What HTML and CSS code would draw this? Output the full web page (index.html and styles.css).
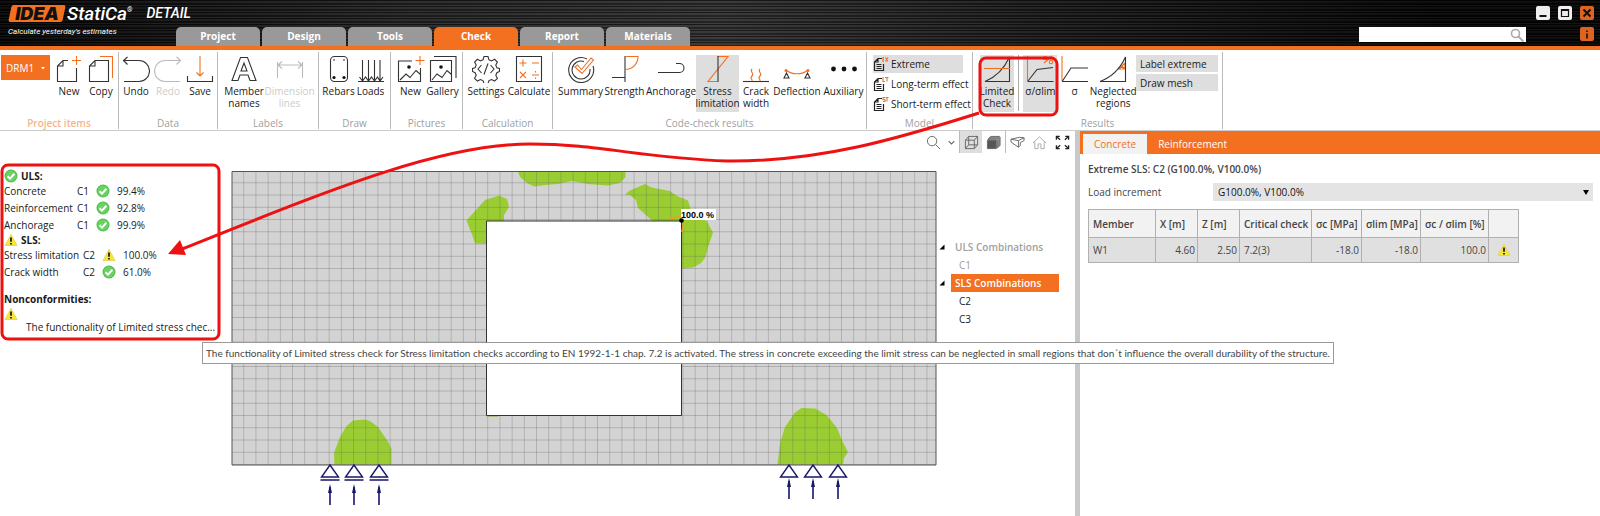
FILE: index.html
```html
<!DOCTYPE html>
<html lang="en">
<head>
    <meta charset="UTF-8">
    <meta name="viewport" content="width=device-width, initial-scale=1.0">
    <title>IDEA StatiCa Detail</title>
    <link rel="stylesheet" href="styles.css">
</head>
<body>
    <svg class="defs" aria-hidden="true">
        <symbol id="ok" viewBox="0 0 14 14">
            <circle cx="7" cy="7" r="6.5" fill="#4fc04f"/>
            <circle cx="7" cy="7" r="5.4" fill="#6bd163"/>
            <path d="M3.6 7.2l2.4 2.4 4.4-4.8" fill="none" stroke="#fff" stroke-width="2"/>
        </symbol>
        <symbol id="warn" viewBox="0 0 14 14">
            <path d="M7 1.5l6 11H1z" fill="#f6e63c" stroke="#e6d75a" stroke-linejoin="round"/>
            <path d="M7 4.6v4.2M7 10v1.6" stroke="#222" stroke-width="1.8"/>
        </symbol>
        <symbol id="sheet" viewBox="0 0 16 16">
            <path d="M9 2.5H5L1.5 6v8.500h9V8M5 2.500V6H1.500M3.500 8.500h5M3.500 10.500h5M3.500 12.500h5" fill="none" stroke="#222" stroke-width="1.200"/>
        </symbol>
    </svg>

    <header class="titlebar">
        <div class="brand">
            <div class="brand-row">
                <span class="logo">IDEA</span>
                <span class="product">StatiCa<sup>®</sup></span>
                <span class="module">DETAIL</span>
            </div>
            <div class="tagline">Calculate yesterday's estimates</div>
        </div>
        <nav class="tabs">
            <a href="#">Project</a>
            <a href="#">Design</a>
            <a href="#">Tools</a>
            <a href="#" class="active">Check</a>
            <a href="#">Report</a>
            <a href="#">Materials</a>
        </nav>
        <div class="window-area">
            <div class="window-row">
                <button class="win" aria-label="Minimize"><svg viewBox="0 0 14 14"><path d="M3.500 10h7" stroke="#111" stroke-width="2"/></svg></button>
                <button class="win" aria-label="Maximize"><svg viewBox="0 0 14 14"><path d="M3.500 3.500h7v7h-7zM3.500 4.500h7" fill="none" stroke="#111" stroke-width="1.200"/></svg></button>
                <button class="win orange" aria-label="Close"><svg viewBox="0 0 14 14"><path d="M3.500 3.500l7 7M10.500 3.500l-7 7" stroke="#111" stroke-width="2"/></svg></button>
            </div>
            <div class="window-row">
                <label class="search">
                    <input type="text" aria-label="Search">
                    <svg viewBox="0 0 14 14"><circle cx="5.500" cy="5.500" r="4" fill="none" stroke="#aaa" stroke-width="1.600"/><path d="M8.500 8.500l5 5" stroke="#aaa" stroke-width="1.800"/></svg>
                </label>
                <button class="win orange" aria-label="About"><svg viewBox="0 0 14 14"><path d="M7 3.500v1.500M7 6.500v5" stroke="#111" stroke-width="1.600"/></svg></button>
            </div>
        </div>
    </header>

    <div class="ribbon">
        <section class="group g-items">
            <div class="tools">
                <button class="project-btn">DRM1 <svg viewBox="0 0 6 4"><path d="M1 1h4L3 3.500z" fill="#fff"/></svg></button>
                <button class="tool"><svg viewBox="0 0 28 28"><path d="M13 5.500H8L2.500 11v15.500h19V13M8 5.500V11H2.500" /><path class="o" d="M21.500 1v9M17 5.500h9"/></svg>New</button>
                <button class="tool"><svg viewBox="0 0 28 28"><path d="M21.500 26.500v-21H8L2.500 11v15.500zM8 5.500V11H2.500"/><path class="o" d="M13 1.500h12.500V23"/></svg>Copy</button>
            </div>
            <h2 class="peach">Project items</h2>
        </section>
        <section class="group g-data">
            <div class="tools">
                <button class="tool"><svg viewBox="0 0 28 28"><path d="M5.500 2L1.500 5.500l4 4M1.500 5.500H17a10 10 0 0 1 0 21H2"/></svg>Undo</button>
                <button class="tool" disabled><svg viewBox="0 0 28 28"><path d="M22.500 2l4 3.500-4 4M26.500 5.500H11a10 10 0 0 0 0 21h15"/></svg>Redo</button>
                <button class="tool"><svg viewBox="0 0 28 28"><path d="M1.500 21v5.500h25V21"/><path class="o" d="M14 1v20M10.500 17.500L14 21l3.500-3.500"/></svg>Save</button>
            </div>
            <h2>Data</h2>
        </section>
        <section class="group g-labels">
            <div class="tools">
                <button class="tool wide"><svg viewBox="0 0 28 28"><path d="M10.500 2.500h7L26 25.500h-6l-2-5.500h-8l-2 5.500H2zM14 8l-3 8h6z"/></svg>Member<br>names</button>
                <button class="tool wider" disabled><svg viewBox="0 0 28 28"><path d="M1.500 23V7M26.500 23V7M2 10h24M6 6.500L2 10l4 3.500M22 6.500l4 3.500-4 3.500"/></svg>Dimension<br>lines</button>
            </div>
            <h2>Labels</h2>
        </section>
        <section class="group g-draw">
            <div class="tools">
                <button class="tool"><svg viewBox="0 0 28 28"><rect x="5.500" y="1.500" width="17" height="25" rx="4"/><circle class="f" cx="9" cy="5" r=".8"/><circle class="f" cx="19" cy="5" r=".8"/><circle class="f" cx="9" cy="22.500" r="1.600"/><circle class="f" cx="19" cy="22.500" r="1.600"/></svg>Rebars</button>
                <button class="tool"><svg viewBox="0 0 28 28"><path d="M1 26.500h26M5.500 5v20M11.500 5v20M17.500 5v20M23 5v20M2.500 22l3 4 3-4 3 4 3-4 3 4 3-4 2.500 4 3-4"/></svg>Loads</button>
            </div>
            <h2>Draw</h2>
        </section>
        <section class="group g-pictures">
            <div class="tools">
                <button class="tool"><svg viewBox="0 0 28 28"><path d="M15 6H1.500v20.500h22V13M3 25l6-6 4 3.500 6-7 4.500 4"/><circle class="f" cx="12" cy="12" r="1.800"/><path class="o" d="M23 1v9M18.500 5.500h9"/></svg>New</button>
                <button class="tool"><svg viewBox="0 0 28 28"><path d="M1.500 5.500h21v21h-21zM3 25l5-6 5 3.500 5-7 4.500 4M5 1.500h22V23"/><circle class="f" cx="12" cy="12" r="1.800"/></svg>Gallery</button>
            </div>
            <h2>Pictures</h2>
        </section>
        <section class="group g-calc">
            <div class="tools">
                <button class="tool wide"><svg viewBox="0 0 28 28"><path d="M12 1.500h4l1 3.300 2.600 1.100 3-1.600 2.800 2.800-1.600 3 1.100 2.600 2.600.8v3l-2.600 1.200-1.100 2.600 1.600 3-2.800 2.800-3-1.600-2.600 1.100-1 3h-4l-1-3-2.600-1.100-3 1.600-2.800-2.800 1.600-3-1.100-2.600-2.600-1.200v-3l2.600-.8 1.100-2.600-1.600-3 2.800-2.800 3 1.600L11 4.800zM9.500 10L6 14l3.500 4M18.500 10l3.500 4-3.500 4M16 8.500l-4 11"/></svg>Settings</button>
                <button class="tool wide"><svg viewBox="0 0 28 28"><path d="M1.500 1.500h25v25h-25z"/><path class="o" d="M8 4.500v7M4.500 8h7M17 8h7M5 17l6 6M11 17l-6 6M17 20h7M20.500 16v1.500M20.500 22.500V24"/></svg>Calculate</button>
            </div>
            <h2>Calculation</h2>
        </section>
        <section class="group g-results">
            <div class="tools">
                <button class="tool wide"><svg viewBox="0 0 28 28"><path d="M20 4A12.500 12.500 0 1 0 26 11M17 6.500A9 9 0 1 0 23 14"/><path class="o" d="M8 12l2.500-2 4 4.500L24 3l2.500 2L15 18.500z"/></svg>Summary</button>
                <button class="tool wide"><svg viewBox="0 0 28 28"><path d="M14 1v26M1 22.500h13"/><path class="o" d="M14 1.500h13c0 7-5 13-13 13"/></svg>Strength</button>
                <button class="tool wider"><svg viewBox="0 0 28 28"><path d="M1 17.500h21.500a4.500 4.500 0 0 0 0-9H19"/></svg>Anchorage</button>
                <button class="tool wide on"><svg viewBox="0 0 28 28"><path class="o" d="M13.500 1.500H24l-20 25h9.500"/><path d="M14 1v26"/></svg>Stress<br>limitation</button>
                <button class="tool"><svg viewBox="0 0 28 28"><path d="M1 26.500h26"/><path class="o" d="M10 14c-3 3 3 4 0 7s1 3 0 5M18 14c-3 3 3 4 0 7s1 3 0 5"/></svg>Crack<br>width</button>
                <button class="tool wider"><svg viewBox="0 0 28 28"><path class="o" d="M3 15c6 5 16 5 22 0"/><path d="M3.500 18l-2.500 5h5zM24.500 18l-2.500 5h5z"/><circle class="fo" cx="3" cy="15.500" r="1.500"/><circle class="fo" cx="25" cy="15.500" r="1.500"/></svg>Deflection</button>
                <button class="tool wide"><svg viewBox="0 0 28 28"><circle class="f" cx="3.500" cy="14" r="2.400"/><circle class="f" cx="14" cy="14" r="2.400"/><circle class="f" cx="24.500" cy="14" r="2.400"/></svg>Auxiliary</button>
            </div>
            <h2>Code-check results</h2>
        </section>
        <section class="group g-model">
            <div class="rows">
                <button class="row on"><svg viewBox="0 0 16 16"><use href="#sheet"/><path class="o" d="M11 1.500h-1v4h1M10 3.500h1M12.500 1.500l2.500 4M15 1.500l-2.500 4"/></svg>Extreme</button>
                <button class="row"><svg viewBox="0 0 16 16"><use href="#sheet"/><path class="o" d="M10 1v4.500h2M12 1.500h3.500M14 1.500v4"/></svg>Long-term effect</button>
                <button class="row"><svg viewBox="0 0 16 16"><use href="#sheet"/><path class="o" d="M12 1.500h-2v2h2v2h-2M12.500 1.500h3M14 1.500v4"/></svg>Short-term effect</button>
            </div>
            <h2>Model</h2>
        </section>
        <section class="group g-extra">
            <div class="tools">
                <button class="tool mid on"><svg viewBox="0 0 28 28"><path d="M2 26.500C13 22 21 14 26.500 2v24.500z"/><path class="o" d="M1 13.500h26"/></svg>Limited<br>Check</button>
                <span class="divider"></span>
                <button class="tool mid on"><svg viewBox="0 0 28 28"><path class="o" d="M1.500 1v25M18 8l8-7"/><circle class="o" cx="19" cy="3" r="1.700"/><circle class="o" cx="25" cy="7" r="1.700"/><path d="M1.500 26.500h26M2 26l9-11.500 16-2"/></svg>σ/σlim</button>
                <button class="tool"><svg viewBox="0 0 28 28"><path class="o" d="M1 1v25"/><path d="M1 26.500h26M1.500 26l8.500-13h17"/></svg>σ</button>
                <button class="tool wide"><svg viewBox="0 0 28 28"><path class="o" d="M26 8l-6 6h6zM20 14l3-3 3 3M22 11l4 3"/><path d="M1 26.500C13 22 21 14 26.500 2v24.500z"/></svg>Neglected<br>regions</button>
                <div class="rows labels">
                    <button class="row on">Label extreme</button>
                    <button class="row on">Draw mesh</button>
                </div>
            </div>
            <h2>Results</h2>
        </section>
    </div>

    <main class="workspace">
        <div class="scene">
            <div class="view-tools">
                <button aria-label="Zoom"><svg viewBox="0 0 16 16"><circle cx="6.500" cy="6.500" r="5"/><path d="M10 10l5 5"/></svg></button>
                <button class="narrow" aria-label="Zoom options"><svg viewBox="0 0 16 16"><path d="M3 5.500l5 5 5-5" stroke-width="2"/></svg></button>
                <button class="on sep" aria-label="Wireframe"><svg viewBox="0 0 16 16"><path d="M1.500 5.500h9.500v9H1.500zM1.500 5.500l3.500-4h9.500l-3.500 4M14.500 1.500v9l-3.500 4M5 1.500v9h9.500M5 10.500l-3.500 4"/></svg></button>
                <button aria-label="Solid"><svg viewBox="0 0 16 16"><path d="M1.500 5.500h9.500v9H1.500z" fill="#555"/><path d="M2 4.500l3-3h9.500l-3 3z" fill="#888"/><path d="M12 5.500l3-3v8.500l-3 3z" fill="#888"/></svg></button>
                <button class="sep" aria-label="Member view"><svg viewBox="0 0 16 16"><path d="M1 4.500l9-2 5 .5-6 3zM1 4.500v3l8 5.500V6M9 13l2-2V8l4-2V3"/></svg></button>
                <button aria-label="Home"><svg viewBox="0 0 16 16" class="faint"><path d="M1 8.500L8 2l7 6.500M3 7.500v7h3.500v-5h3v5H13v-7"/></svg></button>
                <button aria-label="Full view"><svg viewBox="0 0 16 16" class="dark"><path d="M1.500 5V1.500H5M1.500 1.500L5.500 5M11 1.500h3.500V5M14.500 1.500L10.500 5M1.500 11v3.500H5M1.500 14.500L5.500 11M14.500 11v3.500H11M14.500 14.500L10.500 11"/></svg></button>
            </div>

            <div class="scene-body">
                <aside class="summary">
                    <h3><svg class="ico"><use href="#ok"/></svg>ULS:</h3>
                    <table class="uls">
                        <tr><td>Concrete</td><td>C1</td><td><svg class="ico"><use href="#ok"/></svg></td><td>99.4%</td></tr>
                        <tr><td>Reinforcement</td><td>C1</td><td><svg class="ico"><use href="#ok"/></svg></td><td>92.8%</td></tr>
                        <tr><td>Anchorage</td><td>C1</td><td><svg class="ico"><use href="#ok"/></svg></td><td>99.9%</td></tr>
                    </table>
                    <h3><svg class="ico"><use href="#warn"/></svg>SLS:</h3>
                    <table class="sls">
                        <tr><td>Stress limitation</td><td>C2</td><td><svg class="ico"><use href="#warn"/></svg></td><td>100.0%</td></tr>
                        <tr><td>Crack width</td><td>C2</td><td><svg class="ico"><use href="#ok"/></svg></td><td>61.0%</td></tr>
                    </table>
                    <h3 class="nonconf">Nonconformities:</h3>
                    <svg class="ico"><use href="#warn"/></svg>
                    <p>The functionality of Limited stress chec...</p>
                </aside>

                <svg class="model" viewBox="230 170 708 340">
                    <defs>
                        <pattern id="mesh" x="232" y="171" width="12.200" height="12.250" patternUnits="userSpaceOnUse">
                            <path d="M12 0v12.250M0 12h12.200" stroke="#606060" stroke-opacity=".45" stroke-width=".9" fill="none"/>
                        </pattern>
                        <g id="support">
                            <path d="M0 0l-8.500 12h17z" fill="#fff" stroke="#16166b" stroke-width="1.400"/>
                        </g>
                        <g id="reaction">
                            <path d="M0 3v18" stroke="#16166b" stroke-width="1.600"/>
                            <path d="M0 0l2 9h-4z" fill="#16166b"/>
                        </g>
                    </defs>
                    <path d="M232 171.500h704v293.500H232z" fill="#d3d3d3"/>
                    <g fill="#9acd32">
                        <path d="M518 171.500l2 5.500 7 6 7 3.500 11-1.500 13-1 14-3 16 3 20 1.500 12-2.500 5.500-6v-5.500z"/>
                        <path d="M466.500 220.500L485 200l14-4.500 8 3.500 2 8-5 8v6h-17v23l-12-.5-2-6.500z"/>
                        <path d="M625 194.500l5-4 15-6.500 6.500 3.500L670 191l7 5 11 4.500 3 9.500 15.500 11 6.500 11.500-5 14.500-2.500 10-4.500 6-8 4.500-11.500 1V221h-29L638 208l-2-8-6-5z"/>
                        <path d="M334.500 464.500L334 453l6-16 6.500-11 6.500-5.500 12-1 5 1.500 8 6 10 14.500 3.500 7.500v15.500z"/>
                        <path d="M777.500 464.500L780 443l5-16 10-14.500 6.500-4.500 13.500.5 11.500 6.500L837 428l5.500 13.500L848 452l-4 6-1 6.500z"/>
                    </g>
                    <path d="M232 171.500h704v293.500H232z" fill="url(#mesh)" stroke="#555"/>
                    <path d="M487 415.500h11" stroke="#9a9a32" stroke-width="2"/>
                    <path d="M486.500 221h195v194.500h-195z" fill="#fff" stroke="#333"/>
                    <path d="M669 219l12-3M684 222l-2 10" stroke="#f79a1c" stroke-width="1.600"/>
                    <path d="M681 209h35v11h-35z" fill="#fff"/>
                    <circle cx="681.500" cy="220.500" r="2.300"/>
                    <text x="681" y="218" class="peak">100.0 %</text>
                    <use href="#support" x="330" y="465"/>
                    <use href="#support" x="354" y="465"/>
                    <use href="#support" x="379" y="465"/>
                    <path d="M320.500 480h19M344.500 480h19M369.500 480h19" stroke="#16166b" stroke-width="1.500"/>
                    <use href="#reaction" x="330" y="484"/>
                    <use href="#reaction" x="354" y="484"/>
                    <use href="#reaction" x="379" y="484"/>
                    <use href="#support" x="789" y="465"/>
                    <use href="#support" x="813" y="465"/>
                    <use href="#support" x="838" y="465"/>
                    <use href="#reaction" x="789" y="478"/>
                    <use href="#reaction" x="813" y="478"/>
                    <use href="#reaction" x="838" y="478"/>
                </svg>

                <ul class="tree">
                    <li class="head muted"><svg viewBox="0 0 6 6"><path d="M5.500.5v5h-5z"/></svg><span>ULS Combinations</span></li>
                    <li class="muted"><span>C1</span></li>
                    <li class="head selected"><svg viewBox="0 0 6 6"><path d="M5.500.5v5h-5z"/></svg><span>SLS Combinations</span></li>
                    <li><span>C2</span></li>
                    <li><span>C3</span></li>
                </ul>
            </div>
        </div>

        <section class="panel">
            <nav class="panel-tabs">
                <a href="#" class="active">Concrete</a>
                <a href="#">Reinforcement</a>
            </nav>
            <div class="panel-body">
                <h3>Extreme SLS: C2 (G100.0%, V100.0%)</h3>
                <div class="field">
                    <label for="increment">Load increment</label>
                    <select id="increment"><option>G100.0%, V100.0%</option></select>
                </div>
                <table class="data">
                    <colgroup><col class="c-member"><col class="c-xz"><col class="c-xz"><col class="c-check"><col class="c-sc"><col class="c-sl"><col class="c-ratio"><col class="c-icon"></colgroup>
                    <thead>
                        <tr><th>Member</th><th>X [m]</th><th>Z [m]</th><th>Critical check</th><th>σc [MPa]</th><th>σlim [MPa]</th><th>σc / σlim [%]</th><th></th></tr>
                    </thead>
                    <tbody>
                        <tr><td>W1</td><td class="num">4.60</td><td class="num">2.50</td><td>7.2(3)</td><td class="num">-18.0</td><td class="num">-18.0</td><td class="num">100.0</td><td class="mark"><svg class="ico"><use href="#warn"/></svg></td></tr>
                    </tbody>
                </table>
            </div>
        </section>
    </main>

    <div class="tooltip" role="tooltip">The functionality of Limited stress check for Stress limitation checks according to EN 1992-1-1 chap. 7.2 is activated. The stress in concrete exceeding the limit stress can be neglected in small regions that don´t influence the overall durability of the structure.</div>

    <!-- callout marks -->
    <svg class="callout" width="1600" height="516" viewBox="0 0 1600 516" aria-hidden="true">
        <rect x="2" y="165" width="217" height="174" rx="6"/>
        <rect x="980" y="58" width="77" height="57" rx="6"/>
        <path d="M979 113C900 138 820 162 727 161C640 158 600 144 530 144C440 144 330 190 182 249"/>
        <path class="tip" d="M168 254l12-14 6 15z"/>
    </svg>
</body>
</html>
```
FILE: styles.css
```css
* {
    box-sizing: border-box;
}

body {
    margin: 0;
    min-height: 100vh;
    display: flex;
    flex-direction: column;
    position: relative;
    overflow-x: hidden;
    background: #fff;
    color: #1a1a1a;
    font: 10px/12px "Open Sans", "Noto Sans", sans-serif;
}

button, input, select {
    font: inherit;
    color: inherit;
    border: 0;
    padding: 0;
    margin: 0;
    background: none;
}

a {
    text-decoration: none;
}

h2, h3, p {
    margin: 0;
}

.defs {
    position: absolute;
    width: 0;
    height: 0;
}

.ico {
    width: 14px;
    height: 14px;
    display: block;
}

/* title bar */
.titlebar {
    display: flex;
    height: 50px;
    border-bottom: 4px solid #f37021;
    background:
        repeating-linear-gradient(rgba(0, 0, 0, 0.5) 0 1px, rgba(255, 255, 255, 0.04) 1px 3px, rgba(0, 0, 0, 0.3) 3px 5px, rgba(255, 255, 255, 0.06) 5px 6px),
        linear-gradient(90deg, #050505, #262626 25%, #333 45%, #1c1c1c 65%, #050505 90%);
}

.brand {
    width: 176px;
    flex: none;
    padding: 4px 0 0 8px;
    color: #fff;
    font-family: Roboto, sans-serif;
    font-style: italic;
    white-space: nowrap;
}

.brand-row {
    display: flex;
    align-items: center;
    height: 18px;
}

.logo {
    position: relative;
    z-index: 0;
    flex: none;
    width: 58px;
    text-align: center;
    font-family: Inter, sans-serif;
    font-size: 18px;
    font-weight: 900;
    line-height: 17px;
    color: #111;
}

.logo::before {
    content: "";
    position: absolute;
    z-index: -1;
    inset: 0 2px;
    background: #f37021;
    border-radius: 2px;
    transform: skewX(-12deg);
}

.product {
    margin-left: 1px;
    font-size: 19px;
    font-weight: 500;
}

.product sup {
    font-size: 7px;
    line-height: 7px;
    vertical-align: 8px;
}

.module {
    margin-left: 14px;
    font-size: 14px;
    font-weight: 500;
}

.tagline {
    margin-top: 4px;
    font-size: 8px;
}

.tabs {
    display: flex;
    align-items: flex-end;
    gap: 2px;
}

.tabs a {
    width: 84px;
    height: 19px;
    border-radius: 5px 5px 0 0;
    background: #999;
    color: #fff;
    font-weight: 700;
    line-height: 19px;
    text-align: center;
}

.tabs a.active {
    background: #f37021;
}

.window-area {
    margin-left: auto;
    padding: 6px 6px 0 0;
    display: flex;
    flex-direction: column;
    gap: 7px;
}

.window-row {
    display: flex;
    justify-content: flex-end;
    gap: 8px;
}

.win {
    width: 14px;
    height: 14px;
    border-radius: 2px;
    background: #eee;
}

.win svg {
    display: block;
}

.win.orange {
    background: #dd6420;
}

.search {
    display: flex;
    align-items: center;
    width: 167px;
    height: 15px;
    margin-right: 46px;
    padding-right: 2px;
    background: #fff;
}

.search input {
    flex: 1;
    min-width: 0;
    outline: 0;
}

.search svg {
    width: 14px;
    height: 14px;
}

/* ribbon */
.ribbon {
    display: flex;
    height: 81px;
    padding-top: 2px;
    border-bottom: 1px solid #ccc;
}

.group {
    display: flex;
    flex: none;
    flex-direction: column;
    justify-content: space-between;
    height: 77px;
    padding-top: 3px;
    border-right: 1px solid #bbb;
}

.group h2 {
    font-size: 10px;
    font-weight: 400;
    line-height: 12px;
    color: #a0a0a0;
    text-align: center;
}

.group h2.peach {
    color: #f7b48c;
    font-weight: 600;
}

.g-items { width: 119px; }
.g-data { width: 99px; }
.g-labels { width: 101px; }
.g-draw { width: 72px; }
.g-pictures { width: 72px; }
.g-calc { width: 90px; }
.g-results { width: 314px; }
.g-model { width: 106px; }
.g-extra { width: 250px; }

.tools {
    display: flex;
    justify-content: center;
    align-items: flex-start;
}

.g-results .tools {
    gap: 1px;
    padding-left: 5px;
}

.g-extra .tools {
    justify-content: space-between;
    padding: 0 4px 0 7px;
}

.tool {
    display: flex;
    flex-direction: column;
    align-items: center;
    width: 32px;
    height: 57px;
    line-height: 12px;
    white-space: nowrap;
}

.tool.mid {
    width: 34px;
}

.tool.wide {
    width: 43px;
}

.tool.wider {
    width: 48px;
}

.tool:disabled {
    color: #ccc;
}

.tool svg {
    flex: none;
    width: 28px;
    height: 28px;
    margin-bottom: 2px;
}

.tool svg *, .row svg path {
    fill: none;
    stroke: #333;
    stroke-width: 1.1;
}

.tool:disabled svg * {
    stroke: #bbb;
}

.tool svg .o, .row svg .o {
    stroke: #f37021;
}

.tool svg .f {
    fill: #111;
    stroke: none;
}

.tool svg .fo {
    fill: #f37021;
    stroke: none;
}

.on {
    background: #dedede;
}

.project-btn {
    display: flex;
    align-items: center;
    justify-content: space-between;
    width: 49px;
    height: 25px;
    margin-right: 3px;
    padding: 0 4px 0 5px;
    background: #f37021;
    color: #fff;
}

.project-btn svg {
    width: 6px;
    height: 4px;
}

.divider {
    width: 1px;
    height: 56px;
    margin: 0 3px;
    background: #aaa;
}

.rows {
    display: flex;
    flex-direction: column;
    gap: 2px;
    padding-left: 6px;
}

.row {
    display: flex;
    align-items: center;
    gap: 2px;
    width: 90px;
    height: 18px;
    white-space: nowrap;
}

.row svg {
    flex: none;
    width: 16px;
    height: 16px;
}

.rows.labels {
    padding: 0;
}

.labels .row {
    width: 82px;
    height: 17px;
    padding-left: 4px;
}

/* work area */
.workspace {
    flex: 1;
    display: flex;
}

.scene {
    flex: 1;
    min-width: 0;
}

.view-tools {
    display: flex;
    justify-content: flex-end;
    height: 23px;
    padding-right: 1px;
}

.view-tools button {
    display: flex;
    align-items: center;
    justify-content: center;
    width: 23px;
    height: 22px;
}

.view-tools .narrow {
    width: 12px;
    margin-right: 2px;
}

.view-tools .sep {
    border-left: 1px solid #bbb;
}

.view-tools svg {
    width: 15px;
    height: 15px;
    fill: none;
    stroke: #666;
}

.view-tools .narrow svg {
    width: 9px;
}

.view-tools .faint {
    stroke: #aaa;
}

.view-tools .dark {
    stroke: #222;
    stroke-width: 1.4;
}

.scene-body {
    display: flex;
    padding-top: 10px;
}

.summary {
    flex: none;
    width: 230px;
    padding: 5px 0 0 4px;
}

.summary h3 {
    display: flex;
    align-items: center;
    gap: 3px;
    height: 13px;
    font-size: 10px;
    font-weight: 700;
}

.summary table {
    border-collapse: collapse;
}

.summary td {
    height: 17px;
    padding: 0;
    white-space: nowrap;
}

.uls td:nth-child(1) { width: 73px; }
.sls td:nth-child(1) { width: 79px; }
.summary td:nth-child(2) { width: 19px; }
.summary td:nth-child(3) { width: 21px; }

.summary .nonconf {
    margin: 12px 0 2px;
}

.summary p {
    padding-left: 22px;
    white-space: nowrap;
}

.model {
    flex: 1;
    min-width: 0;
    display: block;
    align-self: flex-start;
    margin-top: 6px;
}

.peak {
    font: bold 9px "Liberation Sans", Arial, sans-serif;
}

.tree {
    flex: none;
    width: 137px;
    margin: 0;
    padding: 74px 0 0 1px;
    list-style: none;
}

.tree li {
    display: flex;
    align-items: center;
    height: 18px;
    padding-left: 16px;
}

.tree li.head {
    padding-left: 0;
    font-weight: 600;
}

.tree svg {
    width: 6px;
    height: 6px;
    margin-right: 6px;
}

.tree span {
    width: 108px;
    padding-left: 4px;
    line-height: 18px;
    white-space: nowrap;
}

.tree .muted {
    color: #a0a0a0;
}

.tree .selected span {
    background: #f37021;
    color: #fff;
}

/* right panel */
.panel {
    width: 525px;
    flex: none;
    border-left: 5px solid #c8c8c8;
    color: #444;
}

.panel-tabs {
    display: flex;
    height: 23px;
    padding: 3px 0 0 3px;
    background: #f37021;
}

.panel-tabs a {
    padding: 0 11px;
    color: #fff;
    line-height: 20px;
}

.panel-tabs a.active {
    background: #f2f2f2;
    color: #f37021;
}

.panel-body {
    padding: 8px 7px 0 8px;
}

.panel-body h3 {
    font-size: 10px;
    font-weight: 600;
    line-height: 14px;
}

.field {
    display: flex;
    align-items: center;
    margin: 7px 0 8px;
}

.field label {
    width: 125px;
}

.field select {
    flex: 1;
    height: 18px;
    padding: 0 5px;
    appearance: none;
    border-radius: 0;
    color: #111;
    background: #e4e4e4 url("data:image/svg+xml,%3Csvg xmlns='http://www.w3.org/2000/svg' viewBox='0 0 6 5'%3E%3Cpath d='M0 0h6L3 5z'/%3E%3C/svg%3E") no-repeat right 4px center / 6px 5px;
}

.data {
    width: 430px;
    table-layout: fixed;
    border-collapse: collapse;
    border: 1px solid #a0a0a0;
}

.c-member { width: 67px; }
.c-xz { width: 42px; }
.c-check { width: 72px; }
.c-sc { width: 50px; }
.c-sl { width: 59px; }
.c-ratio { width: 68px; }
.c-icon { width: 30px; }

.data th, .data td {
    padding: 0 2px 0 4px;
    border: 1px solid #b0b0b0;
    text-align: left;
    white-space: nowrap;
}

.data th {
    height: 28px;
    padding-right: 0;
    background: #f2f2f2;
    font-weight: 600;
}

.data td {
    height: 25px;
    background: #e0e0e0;
}

.data .num {
    text-align: right;
}

.data .mark {
    padding-left: 8px;
}

/* overlays */
.tooltip {
    position: absolute;
    left: 202px;
    top: 342px;
    padding: 4px 3px;
    border: 1px solid #999;
    background: #fff;
    color: #444;
    font-family: Lato, sans-serif;
    line-height: 12px;
    white-space: nowrap;
}

.callout {
    position: absolute;
    left: 0;
    top: 0;
    pointer-events: none;
    fill: none;
    stroke: #ee1111;
    stroke-width: 3;
}

.callout .tip {
    fill: #ee1111;
    stroke: none;
}
```
